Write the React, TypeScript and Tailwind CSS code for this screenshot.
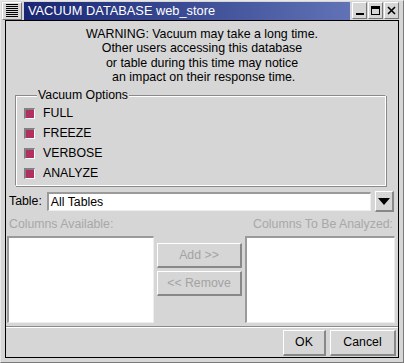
import React from "react";

const font = { fontFamily: '"Liberation Sans", Arial, sans-serif' };

function Check({ label }: { label: string }) {
  return (
    <div className="flex h-[20px] items-center gap-[8px]">
      <span className="box-border h-[11px] w-[11px] border-t-2 border-l-2 border-b border-r border-t-[#808080] border-l-[#808080] border-b-white border-r-white bg-[#b03060]" />
      <span className="text-[12.3px] text-black">{label}</span>
    </div>
  );
}

function Raised({
  children,
  className,
  disabled,
}: {
  children: React.ReactNode;
  className: string;
  disabled?: boolean;
}) {
  return (
    <div
      className={`box-border flex items-center justify-center border-t border-l border-b-2 border-r-2 border-t-white border-l-white border-b-[#888] border-r-[#888] bg-[#d6d6d6] text-[12.3px] ${
        disabled ? "text-[#a3a3a3]" : "text-black"
      } ${className}`}
    >
      {children}
    </div>
  );
}

export default function App() {
  return (
    <div
      className="box-border flex h-[363px] w-[404px] flex-col border border-t-[#e8e8e8] border-l-[#e8e8e8] border-b-[#7a7a7a] border-r-[#7a7a7a] bg-[#d6d6d6] px-[4px] pb-[4px]"
      style={font}
    >
      {/* Title bar */}
      <div className="flex h-[19px] items-center">
        <div className="-ml-[3px] flex h-[18px] w-[20px] flex-col justify-center gap-[1px] border-t border-l border-b border-r border-t-white border-l-white border-b-[#777] border-r-[#777] px-[3px]">
          {[0, 1, 2, 3, 4, 5, 6].map((i) => (
            <span key={i} className="h-[1px] w-full bg-black" />
          ))}
        </div>
        <div className="ml-[2px] flex h-[18px] flex-1 items-center bg-gradient-to-r from-[#1a2673] to-[#6272b6] pl-[4px] text-[12.8px] text-white">
          VACUUM DATABASE web_store
        </div>
        <div className="ml-[2px] flex gap-[1px]">
          {["min", "max", "close"].map((k) => (
            <div
              key={k}
              className="box-border flex h-[17px] w-[15px] items-center justify-center border-t border-l border-b border-r border-t-white border-l-white border-b-[#777] border-r-[#777] bg-[#d6d6d6]"
            >
              {k === "min" && <span className="mt-[7px] h-[2px] w-[8px] bg-black" />}
              {k === "max" && (
                <span className="box-border h-[9px] w-[9px] border border-t-[3px] border-black" />
              )}
              {k === "close" && (
                <svg width="9" height="9" viewBox="0 0 9 9">
                  <path d="M1 1L8 8M8 1L1 8" stroke="black" strokeWidth="1.6" />
                </svg>
              )}
            </div>
          ))}
        </div>
      </div>

      {/* Client area */}
      <div className="box-border flex flex-1 flex-col border border-black">
        <div className="pt-[6px] text-center text-[12.4px] leading-[14.3px] text-black">
          <div>WARNING: Vacuum may take a long time.</div>
          <div>Other users accessing this database</div>
          <div>or table during this time may notice</div>
          <div>&nbsp;an impact on their response time.</div>
        </div>

        {/* Group box */}
        <div className="relative mt-[11px] ml-[9px] mr-[12px] h-[91px] border border-t-[#8a8a8a] border-l-[#8a8a8a] border-b-white border-r-white shadow-[inset_1px_1px_0_white,1px_1px_0_#8a8a8a]">
          <span className="absolute -top-[8px] left-[21px] bg-[#d6d6d6] px-[1px] text-[12.3px] leading-[14px] text-black">
            Vacuum Options
          </span>
          <div className="pt-[7px] pl-[8px]">
            <Check label="FULL" />
            <Check label="FREEZE" />
            <Check label="VERBOSE" />
            <Check label="ANALYZE" />
          </div>
        </div>

        {/* Table row */}
        <div className="mt-[5px] flex items-center pl-[3px] pr-[4px]">
          <span className="text-[12.3px] text-black">Table:</span>
          <div className="ml-[5px] box-border flex h-[19px] flex-1 items-center border-t-2 border-l-2 border-b border-r border-t-[#9a9a9a] border-l-[#9a9a9a] border-b-[#eeeeee] border-r-[#eeeeee] bg-white pl-[2px] text-[12.3px] text-black">
            All Tables
          </div>
          <Raised className="ml-[4px] h-[21px] w-[19px]">
            <svg width="12" height="7" viewBox="0 0 12 7">
              <path d="M0 0H12L6 7Z" fill="black" />
            </svg>
          </Raised>
        </div>

        {/* Column labels */}
        <div className="mt-[5px] flex justify-between pl-[3px] pr-[5px] text-[12.3px] leading-[14px] text-[#a8a8a8]">
          <span>Columns Available:</span>
          <span>Columns To Be Analyzed:</span>
        </div>

        {/* Lists */}
        <div className="mt-[5px] flex h-[87px] pl-[1px] pr-[3px]">
          <div className="box-border w-[147px] border-t-2 border-l-2 border-b border-r border-t-[#9a9a9a] border-l-[#9a9a9a] border-b-[#eeeeee] border-r-[#eeeeee] bg-white" />
          <div className="flex flex-1 flex-col gap-[3px] px-[3px] pt-[7px]">
            <Raised disabled className="h-[25px]">
              Add &gt;&gt;
            </Raised>
            <Raised disabled className="h-[25px]">
              &lt;&lt; Remove
            </Raised>
          </div>
          <div className="box-border w-[150px] border-t-2 border-l-2 border-b border-r border-t-[#9a9a9a] border-l-[#9a9a9a] border-b-[#eeeeee] border-r-[#eeeeee] bg-white" />
        </div>

        {/* Separator */}
        <div className="mt-[3px] h-[2px] border-t border-b border-t-[#8a8a8a] border-b-white" />

        {/* Buttons */}
        <div className="flex flex-1 items-end justify-end gap-[4px] pr-[2px] pb-[1px]">
          <Raised className="h-[26px] w-[43px]">OK</Raised>
          <Raised className="h-[26px] w-[66px]">Cancel</Raised>
        </div>
      </div>
    </div>
  );
}
